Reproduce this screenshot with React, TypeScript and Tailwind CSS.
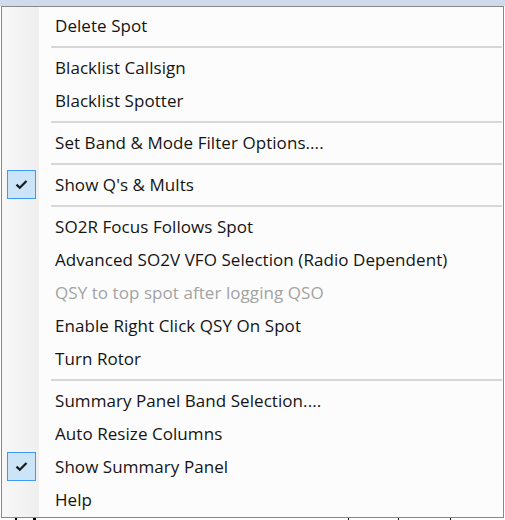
import React from "react";

type Entry =
  | { kind: "item"; label: string; checked?: boolean; disabled?: boolean }
  | { kind: "sep" };

const entries: Entry[] = [
  { kind: "item", label: "Delete Spot" },
  { kind: "sep" },
  { kind: "item", label: "Blacklist Callsign" },
  { kind: "item", label: "Blacklist Spotter" },
  { kind: "sep" },
  { kind: "item", label: "Set Band & Mode Filter Options...." },
  { kind: "sep" },
  { kind: "item", label: "Show Q's & Mults", checked: true },
  { kind: "sep" },
  { kind: "item", label: "SO2R Focus Follows Spot" },
  { kind: "item", label: "Advanced SO2V VFO Selection (Radio Dependent)" },
  { kind: "item", label: "QSY to top spot after logging QSO", disabled: true },
  { kind: "item", label: "Enable Right Click QSY On Spot" },
  { kind: "item", label: "Turn Rotor" },
  { kind: "sep" },
  { kind: "item", label: "Summary Panel Band Selection...." },
  { kind: "item", label: "Auto Resize Columns" },
  { kind: "item", label: "Show Summary Panel", checked: true },
  { kind: "item", label: "Help" },
];

function Check() {
  return (
    <div className="w-[29px] h-[29px] ml-[5px] border border-[#3d9af0] bg-[#cce4f7] flex items-center justify-center">
      <svg width="13" height="11" viewBox="0 0 13 11">
        <path d="M1.5 5.6 L4.8 8.8 L11.5 2" fill="none" stroke="#1a1a1a" strokeWidth="2.2" />
      </svg>
    </div>
  );
}

export default function App() {
  return (
    <div
      className="w-[505px] h-[520px] bg-white overflow-hidden flex flex-col"
      style={{ fontFamily: '"Open Sans", "Noto Sans", sans-serif' }}
    >
      <div className="h-[6px] bg-[#cddbeb] shrink-0" />
      <div className="h-[512px] w-[503px] ml-[1px] border border-[#888888] bg-[#fcfcfc] relative flex flex-col pt-[2px]">
        <div className="absolute left-0 top-0 bottom-0 w-[37px] bg-gradient-to-r from-[#f7f7f7] to-[#efefef]" />
        {entries.map((e, i) =>
          e.kind === "sep" ? (
            <div key={i} className="h-[9px] flex items-center pl-[49px] pr-[1px] relative">
              <div className="w-full h-[2px] bg-[#d7d7d7]" />
            </div>
          ) : (
            <div key={i} className="h-[33px] flex items-center relative">
              <div className="w-[53px] shrink-0">{e.checked && <Check />}</div>
              <span
                className={
                  "text-[17px] leading-none tracking-[0.06px] -mt-[1px] " +
                  (e.disabled ? "text-[#a3a3a3]" : "text-[#141414]")
                }
              >
                {e.label}
              </span>
            </div>
          )
        )}
      </div>
      <div className="h-[2px] relative bg-white">
        <div className="absolute top-0 left-[15px] w-[2px] h-[2px] bg-black" />
        <div className="absolute top-0 left-[33px] w-[3px] h-[2px] bg-black" />
        <div className="absolute top-0 left-[348px] w-[1px] h-[2px] bg-black" />
        <div className="absolute top-0 left-[398px] w-[1px] h-[2px] bg-black" />
        <div className="absolute top-0 left-[450px] w-[1px] h-[2px] bg-black" />
      </div>
    </div>
  );
}
